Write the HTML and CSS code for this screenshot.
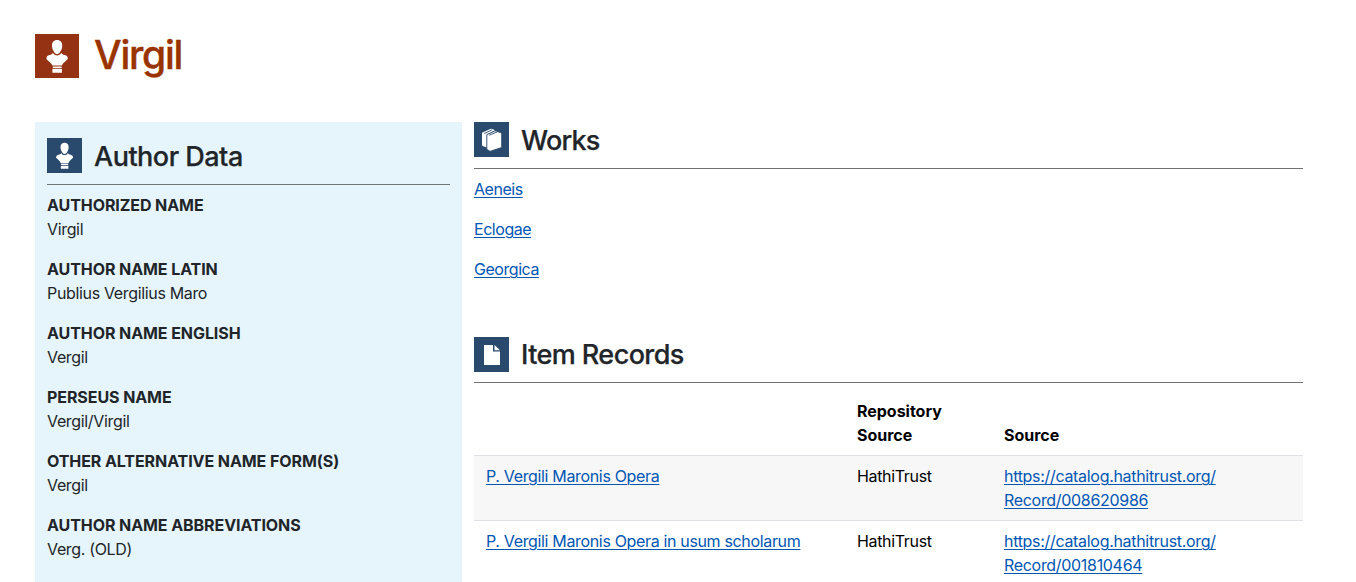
FILE: index.html
```html
<!DOCTYPE html>
<html lang="en">
<head>
<meta charset="utf-8">
<title>Virgil</title>
<link rel="stylesheet" href="styles.css">
</head>
<body>
<svg class="defs" aria-hidden="true">
  <symbol id="bust" viewBox="0 0 44 44">
    <path d="M22.100 6c3.300 0 5.100 2.300 5.100 5.400 0 2-.5 4-1.400 5.400-.5 1.400-1.900 3.400-3.700 3.400s-3.200-2-3.700-3.400c-.9-1.400-1.400-3.400-1.400-5.400C17 8.300 18.800 6 22.100 6z"/>
    <path d="M17.900 18.800c.9 1.900 2.400 2.700 4.200 2.700s3.300-.8 4.200-2.700c.5 1.400 1.800 1.800 3.400 2.200 2.200.5 3.100 1.600 3.100 3.900-1.600 1.900-4.800 3.600-6 6.700h-9.400c-1.200-3.100-4.400-4.800-6-6.700 0-2.300.9-3.400 3.100-3.900 1.600-.4 2.900-.8 3.400-2.200z"/>
    <path d="M17.800 32.400h8.800v1.800h-8.800zM17.400 35.100h9.500v3.600h-9.500z"/>
  </symbol>
</svg>
<main class="page">
  <header class="title">
    <svg class="icon icon-lg"><use href="#bust"/></svg>
    <h1>Virgil</h1>
  </header>
  <div class="columns">
    <aside class="author">
      <div class="heading">
        <svg class="icon"><use href="#bust"/></svg>
        <h2 class="h-author">Author Data</h2>
      </div>
      <dl>
        <dt>AUTHORIZED NAME</dt><dd>Virgil</dd>
        <dt>AUTHOR NAME LATIN</dt><dd>Publius Vergilius Maro</dd>
        <dt>AUTHOR NAME ENGLISH</dt><dd>Vergil</dd>
        <dt>PERSEUS NAME</dt><dd>Vergil/Virgil</dd>
        <dt>OTHER ALTERNATIVE NAME FORM(S)</dt><dd>Vergil</dd>
        <dt>AUTHOR NAME ABBREVIATIONS</dt><dd>Verg. (OLD)</dd>
      </dl>
    </aside>
    <div class="content">
      <section class="works">
        <div class="heading">
          <svg class="icon" viewBox="0 0 35 35">
            <path d="M8 10.800l8.200-3.900q1-.4 2 0l3 1.300-8.300 4.300v13.100l-4.300-1.600q-.6-.3-.6-1z"/>
            <path class="front" d="M12.800 12.700l7.600-3.500q1-.5 2-.1l4.400 1.700q.9.400.9 1.300v12.500q0 .9-.9 1.200l-9.700 3.200q-.9.300-1.600-.1l-2.100-1.200q-.6-.4-.6-1.100z"/>
            <path class="seam" d="M10.200 11.600l8-3.800M15.200 13.200l8.200-3.300"/>
          </svg>
          <h2 class="h-works">Works</h2>
        </div>
        <ul>
          <li><a href="#">Aeneis</a></li>
          <li><a href="#">Eclogae</a></li>
          <li><a href="#">Georgica</a></li>
        </ul>
      </section>
      <section class="items">
        <div class="heading">
          <svg class="icon" viewBox="0 0 35 35"><path d="M10 8h9v6.500h7V28H10zM20.500 8l5.500 5.200h-5.500z"/></svg>
          <h2 class="h-items">Item Records</h2>
        </div>
        <table>
          <thead>
            <tr><th class="c1"></th><th class="c2">Repository Source</th><th>Source</th></tr>
          </thead>
          <tbody>
            <tr><td><a href="#">P. Vergili Maronis Opera</a></td><td>HathiTrust</td><td><a href="#">https://catalog.hathitrust.org/<wbr>Record/008620986</a></td></tr>
            <tr><td><a href="#">P. Vergili Maronis Opera in usum scholarum</a></td><td>HathiTrust</td><td><a href="#">https://catalog.hathitrust.org/<wbr>Record/001810464</a></td></tr>
          </tbody>
        </table>
      </section>
    </div>
  </div>
</main>
</body>
</html>
```

FILE: styles.css
```css
* { box-sizing: border-box; }
html, body { height: 582px; overflow: hidden; }
body {
  margin: 0;
  background: #fff;
  color: #212529;
  font: 400 16px/24px Inter, "Liberation Sans", sans-serif;
  letter-spacing: -0.34px;
}
h1, h2, dl, dd, ul { margin: 0; padding: 0; }
.defs { position: absolute; width: 0; height: 0; }
.page { padding: 34px 53px 0 35px; }
.title { display: flex; align-items: center; gap: 15px; height: 44px; }
h1 { color: #993300; font-size: 39px; line-height: 44px; font-weight: 500; letter-spacing: -1.25px; padding-bottom: 2px; -webkit-text-stroke: .4px; }
h2 { font-size: 27px; line-height: 34px; font-weight: 500; letter-spacing: -0.5px; padding-top: 2px; -webkit-text-stroke: .25px; }
.icon { width: 35px; height: 35px; flex: none; background: #2a4a6d; fill: #fff; }
.icon-lg { width: 44px; height: 44px; background: #953214; }
.front { stroke: #2a4a6d; stroke-width: .9; }
.seam { fill: none; stroke: #2a4a6d; stroke-width: .9; }
.columns { display: flex; gap: 12px; margin-top: 44px; }
.author { width: 427px; height: 480px; padding: 16px 12px; background: #e6f5fb; }
.content { flex: 1; }
.heading {
  display: flex;
  align-items: center;
  gap: 12px;
  height: 47px;
  padding-bottom: 11px;
  border-bottom: 1px solid #6f7376;
}
.h-works { letter-spacing: -0.8px; }
.h-items { padding-top: 0; letter-spacing: -0.58px; }
dl { padding-top: 8px; }
dt { font-weight: 700; letter-spacing: -0.08px; }
dd { margin-bottom: 16px; }
a { color: #0056b3; text-decoration: underline; text-underline-offset: 2px; text-decoration-thickness: 1px; }
ul { list-style: none; padding-top: 8px; }
li { margin-bottom: 16px; letter-spacing: -0.46px; }
.items { margin-top: 56px; }
.items .heading { height: 46px; padding-bottom: 10px; }
table { width: 100%; border-collapse: collapse; table-layout: fixed; color: #000; margin-top: 4px; }
.c1 { width: 371px; }
.c2 { width: 147px; }
th { text-align: left; vertical-align: bottom; font-weight: 700; padding: 12px 12px 8px; letter-spacing: -0.02px; }
td { vertical-align: top; padding: 8px 12px; border-top: 1px solid #dee2e6; }
td:last-child { letter-spacing: -0.31px; }
tbody tr:nth-child(odd) { background: #f7f7f7; }
```
